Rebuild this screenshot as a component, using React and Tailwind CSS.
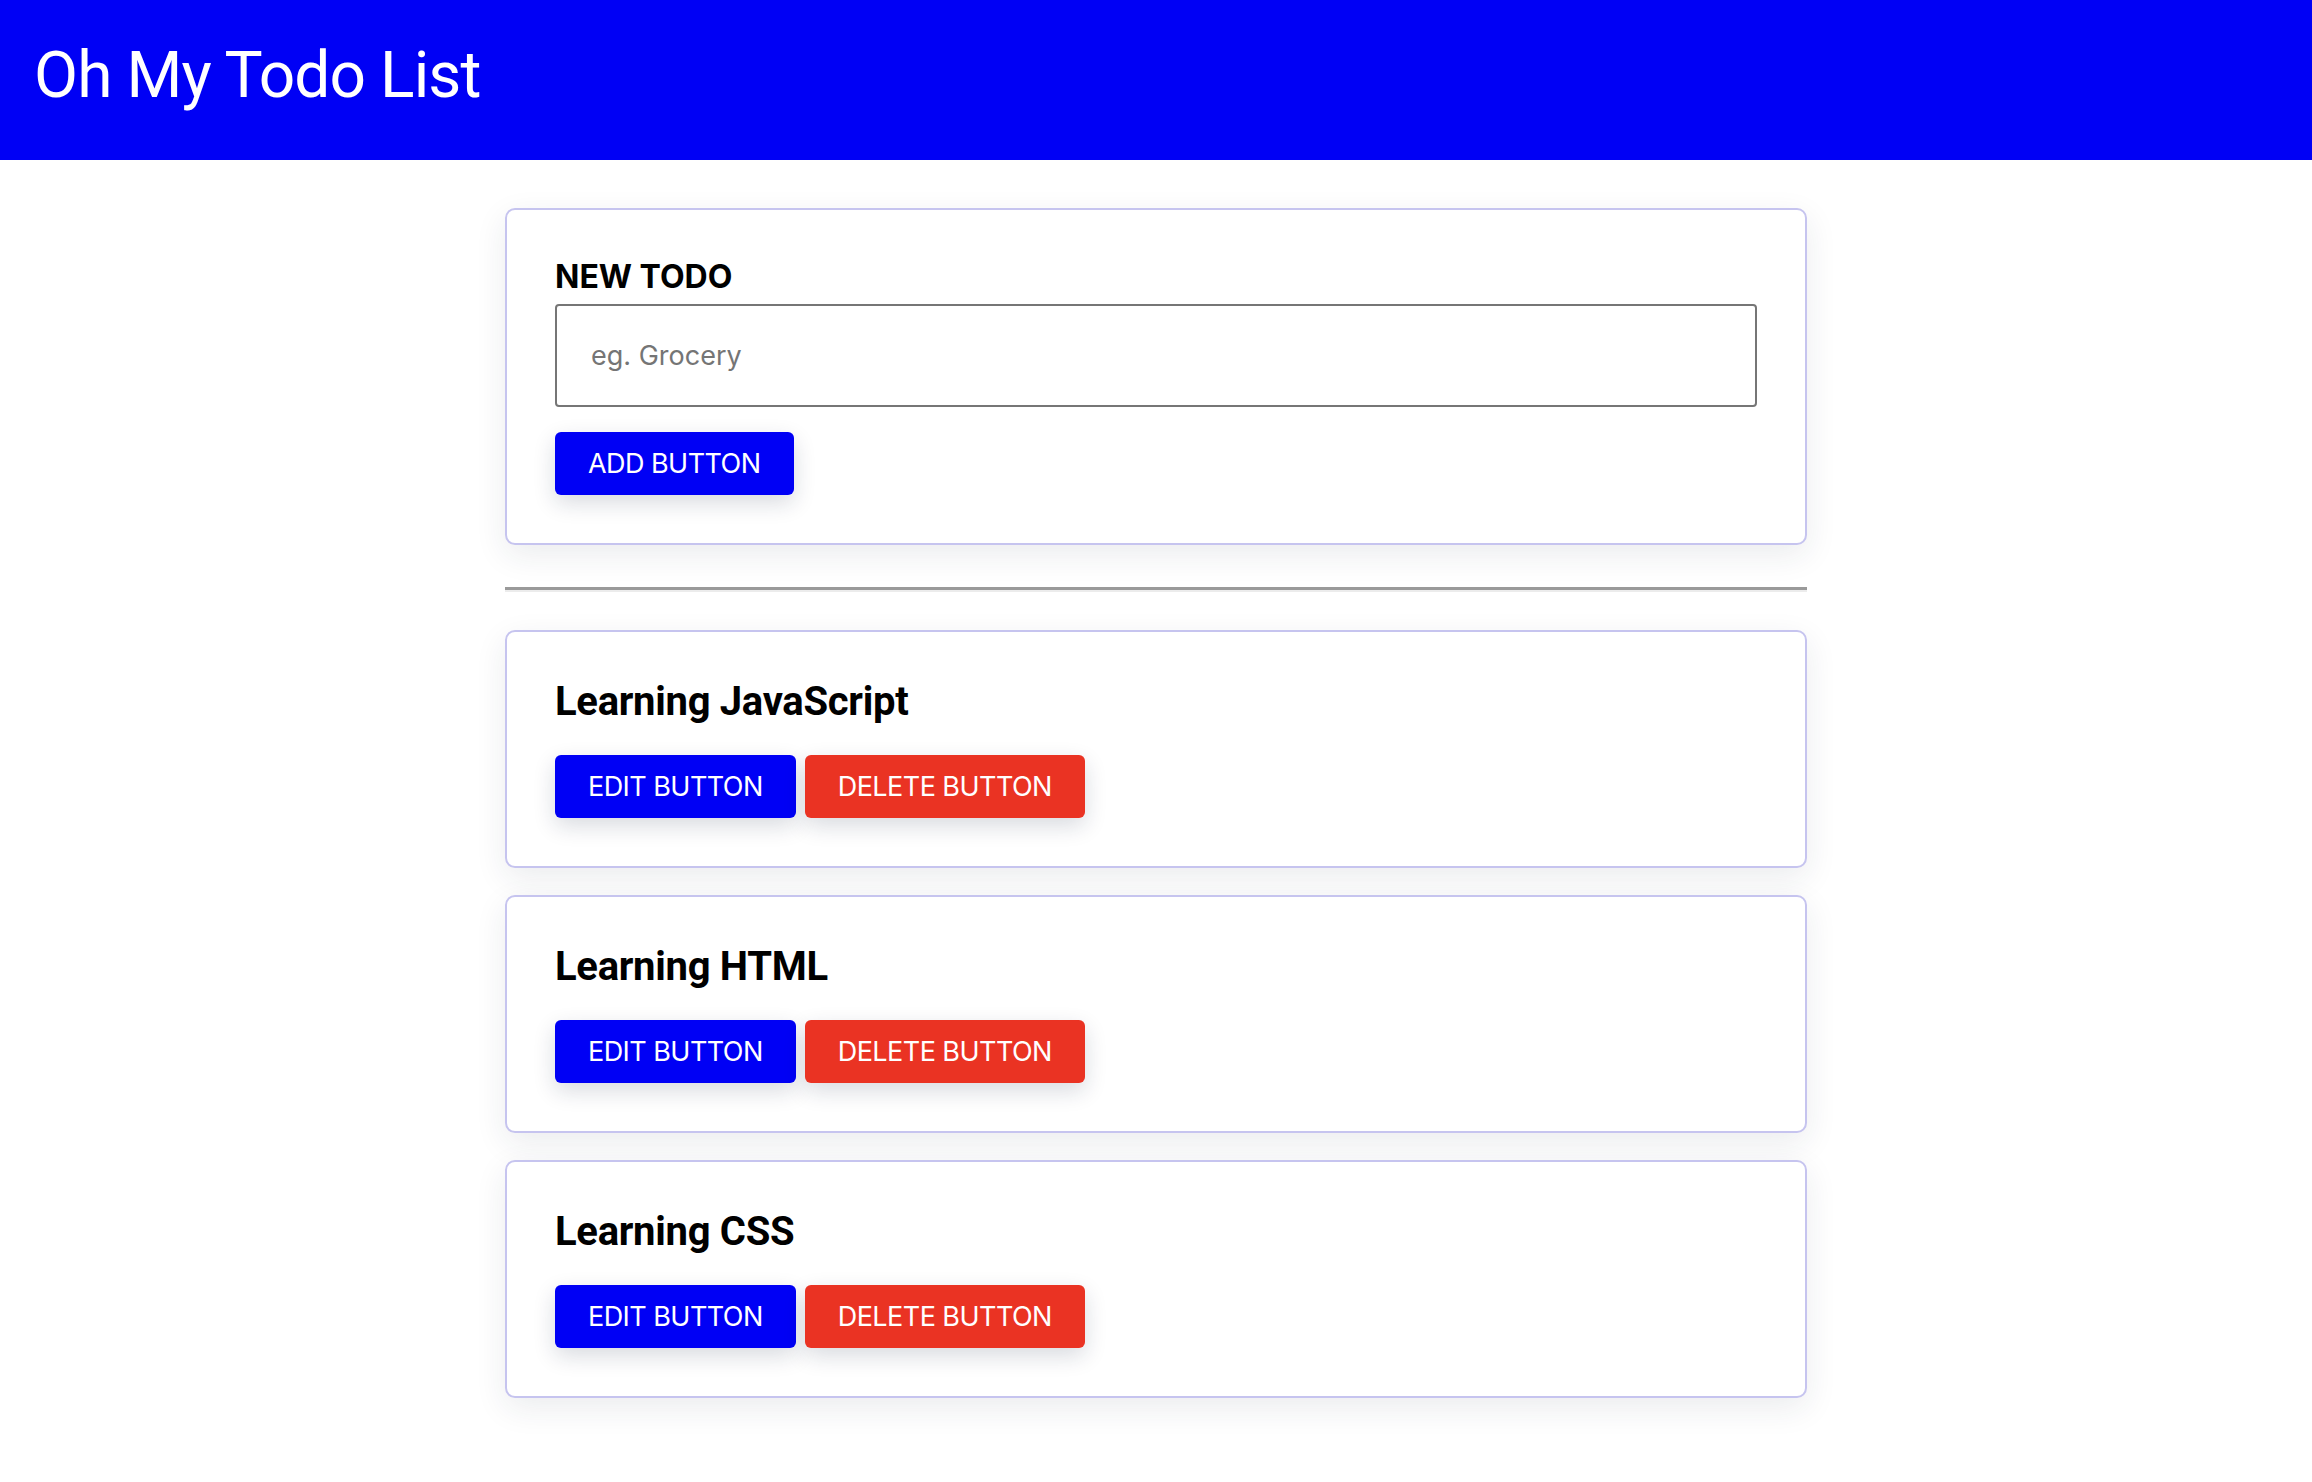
import { useState } from "react";

const TODOS = ["Learning JavaScript", "Learning HTML", "Learning CSS"];

const FONT = { fontFamily: "Inter, 'Noto Sans', sans-serif" };

function Button({ color, children }) {
  return (
    <button
      className={`h-[63px] px-[33px] rounded-[6px] text-white text-[27px] tracking-[-0.55px] uppercase leading-none shadow-[0_8px_22px_rgba(20,30,60,0.16)] ${color}`}
    >
      {children}
    </button>
  );
}

function TodoCard({ title }) {
  return (
    <div className="bg-white border-2 border-[#c6c4ef] rounded-[10px] p-[48px] shadow-[0_10px_32px_rgba(30,40,70,0.09)]">
      <h2 className="font-['Roboto',sans-serif] text-[40px] font-bold leading-[44px] tracking-[-0.3px] text-black">{title}</h2>
      <div className="flex gap-[9px] mt-[31px]">
        <Button color="bg-[#0000f5]">Edit Button</Button>
        <Button color="bg-[#ea3323]">Delete Button</Button>
      </div>
    </div>
  );
}

export default function App() {
  const [value, setValue] = useState("");

  return (
    <div className="min-h-screen bg-white" style={FONT}>
      {/* Header */}
      <header className="h-[160px] bg-[#0000f5] flex items-center px-[34px] pb-[8px]">
        <h1 className="font-['Roboto',sans-serif] text-[64px] font-normal tracking-[-0.9px] text-white leading-none">Oh My Todo List</h1>
      </header>

      <main className="w-[1302px] mx-auto pt-[48px] pb-[80px]">
        {/* New todo form */}
        <div className="bg-white border-2 border-[#c6c4ef] rounded-[10px] p-[48px] shadow-[0_10px_32px_rgba(30,40,70,0.09)]">
          <label className="block text-[32px] font-bold leading-[38px] text-black">NEW TODO</label>
          <input
            value={value}
            onChange={(e) => setValue(e.target.value)}
            placeholder="eg. Grocery"
            className="mt-[8px] block w-full h-[103px] border-2 border-[#767676] rounded-[4px] pl-[34px] text-[27px] text-black placeholder:text-[#757575] outline-none"
          />
          <div className="mt-[25px]">
            <Button color="bg-[#0000f5]">Add Button</Button>
          </div>
        </div>

        <div className="mt-[42px] border-t-[3px] border-[#9a9a9a] border-b-2 border-b-[#ececec]" />

        <div className="mt-[38px] flex flex-col gap-[27px]">
          {TODOS.map((t) => (
            <TodoCard key={t} title={t} />
          ))}
        </div>
      </main>
    </div>
  );
}
